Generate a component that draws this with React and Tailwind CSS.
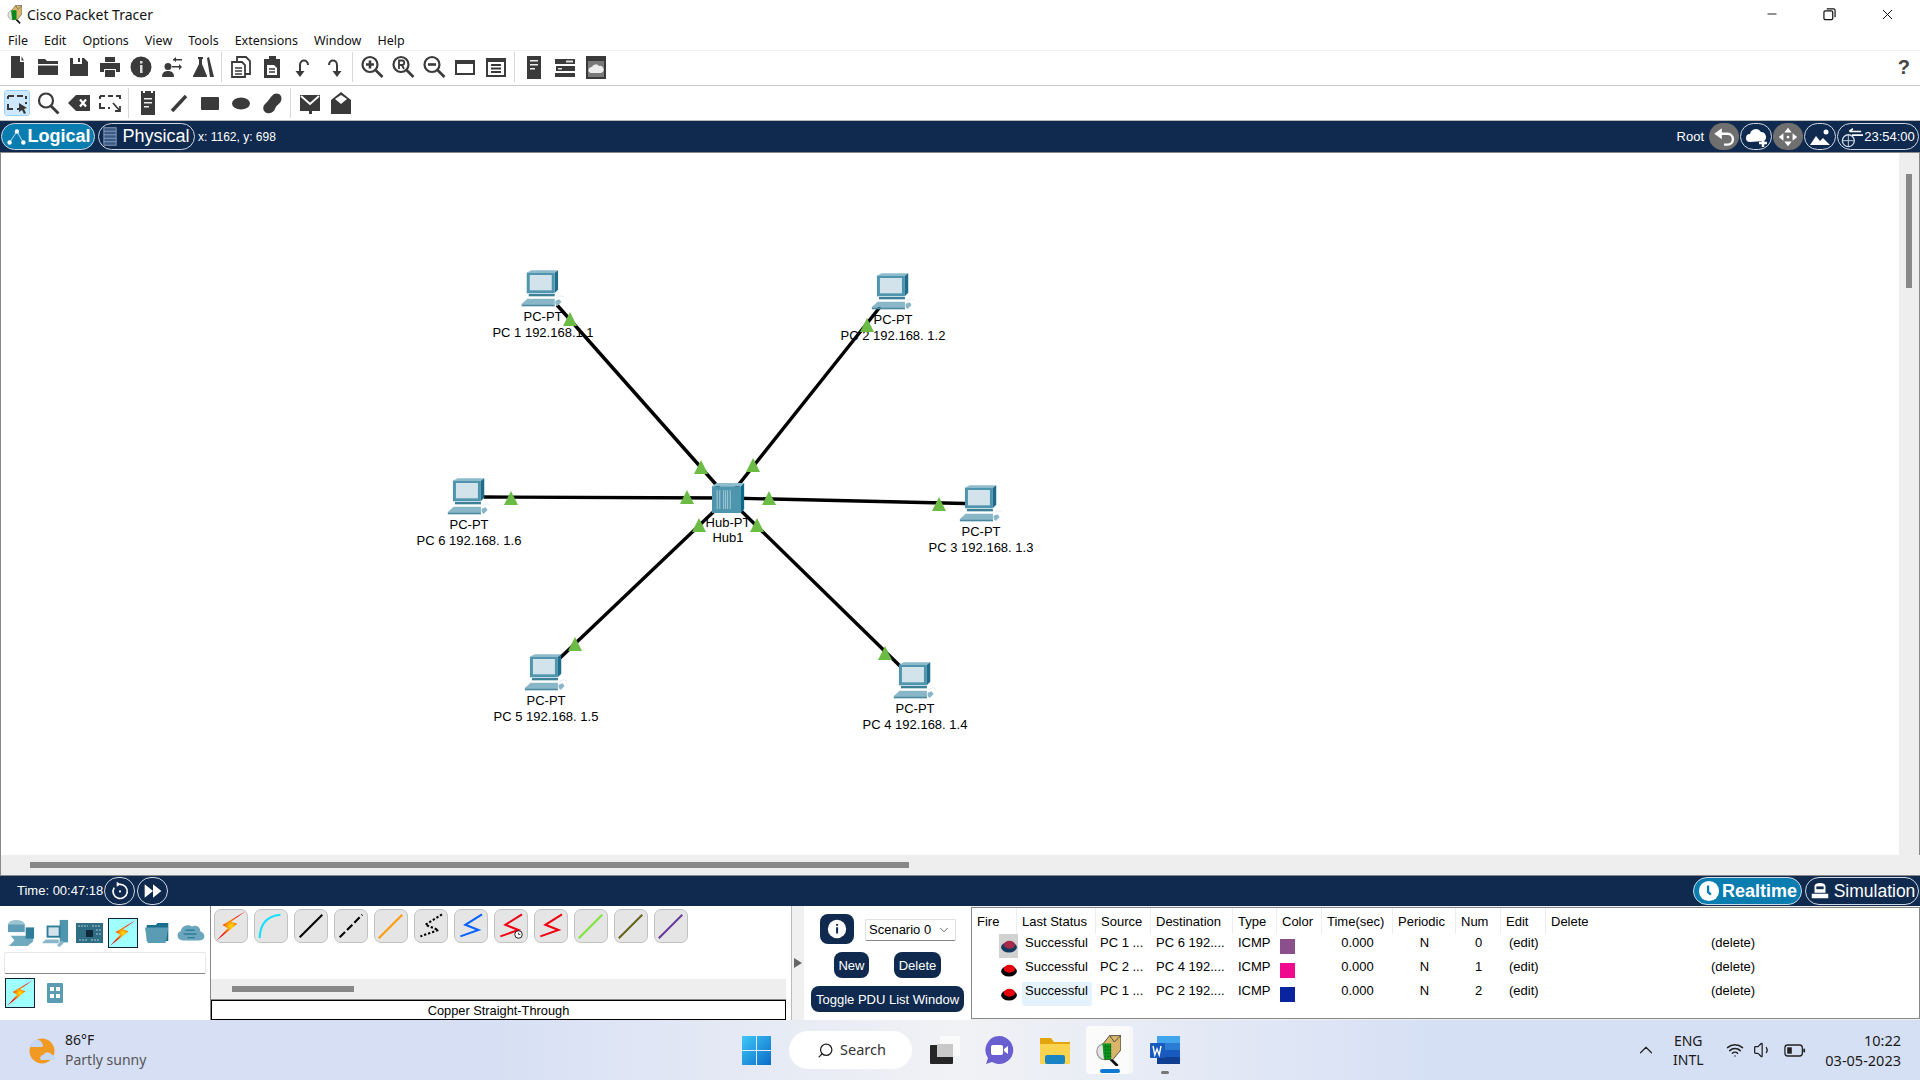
import React from "react";
import { ChevronDown, ChevronUp, Search, Wifi, Volume1, Minus, X } from "lucide-react";

const dark = "#3a3a3a";

// toolbar glyphs, all on a 24 box
const glyphs = {
  newFile: <path d="M6 1h9v6h4v16H6zM16.500 1.500l2.500 4h-2.500z" fill={dark} />,
  open: <path d="M2 4h7l2 2h11v3H2zM2 10.500h20V20H2z" fill={dark} />,
  save: <path d="M3 3h3v6h9V3h2l4 4v14H3zM11 3h2v4h-2z" fill={dark} />,
  print: <path d="M7 2h10v5H7zM2 8h20v9h-4v-3H6v3H2zM7 15h10v7H7z" fill={dark} />,
  info: (
    <>
      <circle cx="12" cy="12" r="10.500" fill={dark} />
      <rect x="11" y="10" width="2.500" height="8" fill="#ddd" />
      <rect x="11" y="6" width="2.500" height="2.500" fill="#ddd" />
    </>
  ),
  inspect: <path d="M8 8a3.500 3.500 0 1 1 0 7 3.500 3.500 0 0 1 0-7zM2 22c0-4 2-6 6-6s6 2 6 6zM13 4h9v1.500h-9zM16 2v5l-3-2.500zM12 11h9v1.500h-9zM19 9l3 3-3 3z" fill={dark} />,
  lab: <path d="M7 2h5v2h-1v5l5 12v1H2v-1l6-12V4H7zM16 3l2-1 5 20h-4z" fill={dark} />,
  copy: (
    <>
      <path d="M8 2h9l4 4v13H8z" fill="#fff" stroke={dark} strokeWidth="1.800" />
      <path d="M3 7h10l3 3v12H3z" fill="#fff" stroke={dark} strokeWidth="1.800" />
      <path d="M6 13h7M6 16h7M6 19h7" stroke={dark} strokeWidth="1.500" />
    </>
  ),
  paste: (
    <>
      <path d="M9 1h7v3h4v19H4V4h5z" fill={dark} />
      <path d="M7 10h7l3 3v7H7z" fill="#fff" />
      <path d="M9 14h6M9 17h6" stroke={dark} strokeWidth="1.400" />
    </>
  ),
  undo: (
    <>
      <path d="M9 22l-4.500-6h9z" fill={dark} />
      <path d="M9 16v-6c0-6 8-6 8 0" fill="none" stroke={dark} strokeWidth="2" />
    </>
  ),
  redo: (
    <>
      <path d="M15 22l-4.500-6h9z" fill={dark} />
      <path d="M15 16v-6c0-6-8-6-8 0" fill="none" stroke={dark} strokeWidth="2" />
    </>
  ),
  zoomIn: (
    <>
      <circle cx="10" cy="9.500" r="7.500" fill="none" stroke={dark} strokeWidth="2.200" />
      <path d="M15.500 15l7 7" stroke={dark} strokeWidth="2.600" />
      <path d="M10 5.500v8M6 9.500h8" stroke={dark} strokeWidth="2.600" />
    </>
  ),
  zoomReset: (
    <>
      <circle cx="10" cy="9.500" r="7.500" fill="none" stroke={dark} strokeWidth="2.200" />
      <path d="M15.500 15l7 7" stroke={dark} strokeWidth="2.600" />
      <path d="M8 14V5.500h3a2 2 0 0 1 0 4.500H8M11 10l2 4" fill="none" stroke={dark} strokeWidth="1.800" />
    </>
  ),
  zoomOut: (
    <>
      <circle cx="10" cy="9.500" r="7.500" fill="none" stroke={dark} strokeWidth="2.200" />
      <path d="M15.500 15l7 7" stroke={dark} strokeWidth="2.600" />
      <path d="M6 9.500h8" stroke={dark} strokeWidth="2.600" />
    </>
  ),
  win: <path d="M2 5h20v15H2zM4 9v9h16V9z" fill={dark} fillRule="evenodd" />,
  listWin: (
    <>
      <path d="M2 3h20v19H2zM4 7v13h16V7z" fill={dark} fillRule="evenodd" />
      <path d="M7 10h10M7 13.500h10M7 17h10" stroke={dark} strokeWidth="1.800" />
    </>
  ),
  tower: (
    <>
      <rect x="5" y="1" width="14" height="23" fill={dark} />
      <path d="M8 5h8v1.500H8zM8 9h8v1.500H8zM8 13h5v1.500H8z" fill="#eee" />
    </>
  ),
  rack: (
    <>
      <path d="M2 4h20v5H2zM3 11h19v5H3zM2 18h20v4H2z" fill={dark} />
      <path d="M13 5.500h7v2h-7zM5 13h4v1.500H5z" fill="#ddd" />
    </>
  ),
  cloudPic: (
    <>
      <rect x="2" y="1" width="20" height="23" fill={dark} />
      <rect x="4" y="6" width="16" height="16" fill="#7a7a7a" />
      <path d="M7 18a3 3 0 0 1 1-6 4 4 0 0 1 7-1 3.500 3.500 0 0 1 2 7z" fill="#ececec" />
    </>
  ),
  select: (
    <>
      <path d="M3 5h6M12 5h6v0M21 5v3M3 5v3M3 13v5h5M12 18h4" fill="none" stroke={dark} strokeWidth="2" />
      <path d="M14 12l8 5-3 1 2 4-2 1-2-4-3 2z" fill={dark} />
      <path d="M21 11v2" stroke={dark} strokeWidth="2" />
    </>
  ),
  inspectBig: (
    <>
      <circle cx="10" cy="9.500" r="7" fill="none" stroke={dark} strokeWidth="2.200" />
      <path d="M15 15l7.500 7.500" stroke={dark} strokeWidth="2.800" />
    </>
  ),
  erase: (
    <>
      <path d="M9 4h14v16H9L1 12z" fill={dark} />
      <path d="M13 8.500l6 7M19 8.500l-6 7" stroke="#fff" strokeWidth="2.200" />
    </>
  ),
  resize: (
    <>
      <path d="M2 5h5M10 5h5M18 5h4v3M2 5v3M2 12v5h5M10 17h2" fill="none" stroke={dark} strokeWidth="2" />
      <path d="M15 12l7 8M22 15v5h-5" fill="none" stroke={dark} strokeWidth="1.800" />
    </>
  ),
  note: (
    <>
      <path d="M5 0h2v2h2V0h6v2h2V0h2v24H5z" fill={dark} />
      <path d="M8 7h8v1.500H8zM8 11h8v1.500H8zM8 15h5v1.500H8z" fill="#eee" />
    </>
  ),
  line: <path d="M5 20L19 5" stroke={dark} strokeWidth="3.500" />,
  rect: <rect x="3" y="6" width="18" height="13" rx="1" fill={dark} />,
  ellipse: <ellipse cx="12" cy="12.500" rx="9" ry="6" fill={dark} />,
  free: <path d="M14 3c5-2 9 2 7 7-1 3-5 4-6 8-1 3-5 5-8 4-4-1-5-6-2-9 3-2 5-7 9-10z" fill={dark} />,
  mail: (
    <>
      <path d="M2 4h20v16h-8v3h-3v-3H2z" fill={dark} />
      <path d="M3 5l9 8 9-8" fill="none" stroke="#fff" strokeWidth="1.800" />
    </>
  ),
  mailOpen: (
    <>
      <path d="M12 1l10 8v14H2V9z" fill={dark} />
      <path d="M6 8l6-4 6 4-6 5z" fill="#fff" />
    </>
  ),
};

function Glyph({ name }) {
  return (
    <svg viewBox="0 0 24 24" className="w-[24px] h-[24px]">
      {glyphs[name]}
    </svg>
  );
}

const toolbarOne = [
  ["newFile", "open", "save", "print", "info", "inspect", "lab"],
  ["copy", "paste", "undo", "redo"],
  ["zoomIn", "zoomReset", "zoomOut", "win", "listWin"],
  ["tower", "rack", "cloudPic"],
];

const toolbarTwo = [
  ["select", "inspectBig", "erase", "resize"],
  ["note", "line", "rect", "ellipse", "free"],
  ["mail", "mailOpen"],
];

function ToolGroups({ groups, active }) {
  return (
    <div className="flex items-center pl-[1px]">
      {groups.map((group, i) => (
        <React.Fragment key={i}>
          {i > 0 && (
            <div className="w-[7px] flex justify-center">
              <div className="w-px h-[30px] bg-[#d8d8d8]" />
            </div>
          )}
          {group.map((name) => (
            <div key={name} className="w-[31px] h-[31px] flex items-center justify-center">
              <div
                className={
                  name === active
                    ? "w-[24px] h-[24px] rounded-[2px] bg-[#cde8ff] outline outline-[#99d1ff]"
                    : "w-[24px] h-[24px]"
                }
              >
                <Glyph name={name} />
              </div>
            </div>
          ))}
        </React.Fragment>
      ))}
    </div>
  );
}

function PtLogo({ className }) {
  return (
    <svg viewBox="0 0 32 40" className={className}>
      <circle cx="12" cy="22" r="10" fill="#e4e4e4" stroke="#999" strokeWidth="1.500" />
      <path d="M18 30l10 10" stroke="#111" strokeWidth="3.500" />
      <path d="M10 12l8-10h14v18l-10 12H12z" fill="#d9b56a" stroke="#333" strokeWidth="1" />
      <path d="M9 12h11v20H11z" fill="#12a012" />
      <path d="M11 16h9M11 20h9M11 24h9M11 28h9M13 12v20M16 12v20M19 12v20" stroke="#063" strokeWidth="0.800" />
      <path d="M18 2l6 8 8-8" fill="none" stroke="#333" strokeWidth="1" />
    </svg>
  );
}

function PcIcon() {
  return (
    <svg viewBox="0 0 135 111" className="w-[45px] h-[37px] translate-x-[1px]">
      <path d="M16 8L30 1h80l-10 7z" fill="#8fbccd" />
      <path d="M100 8l10-7v58l-10 10z" fill="#1f6d8a" />
      <rect x="16" y="8" width="84" height="62" fill="#4f95ae" />
      <rect x="25" y="15" width="66" height="46" fill="#d2e3ec" />
      <rect x="22" y="72" width="78" height="7" fill="#3f8099" />
      <path d="M0 103L18 86h82v17z" fill="#8ab7c8" />
      <rect x="0" y="103" width="100" height="6" fill="#4a8aa3" />
      <path d="M102 92l12-4 6 8-12 12-6-6z" fill="#8ab7c8" />
      <path d="M106 84c4-8 14-8 22-2" fill="none" stroke="#e8f0f4" strokeWidth="4" />
    </svg>
  );
}

function HubIcon() {
  return (
    <svg viewBox="0 0 99 92" className="w-[33px] h-[30px]">
      <path d="M0 10L14 0h85L89 10z" fill="#8fbccd" />
      <path d="M89 10L99 0v80L89 92z" fill="#0c6a89" />
      <rect x="0" y="10" width="89" height="82" fill="#4f95ae" />
      <path d="M16 22v58M24 22v58M36 22v58M42 22v58M48 22v58M56 22v58" stroke="#b8d6e2" strokeWidth="2.500" />
    </svg>
  );
}

const nodes = [
  { pos: "left-[542px] top-[117px]", lines: ["PC-PT", "PC 1 192.168.1.1"] },
  { pos: "left-[892px] top-[120px]", lines: ["PC-PT", "PC 2 192.168. 1.2"] },
  { pos: "left-[468px] top-[325px]", lines: ["PC-PT", "PC 6 192.168. 1.6"] },
  { pos: "left-[980px] top-[332px]", lines: ["PC-PT", "PC 3 192.168. 1.3"] },
  { pos: "left-[545px] top-[501px]", lines: ["PC-PT", "PC 5 192.168. 1.5"] },
  { pos: "left-[914px] top-[509px]", lines: ["PC-PT", "PC 4 192.168. 1.4"] },
];

// links run hub to the edge of each PC, in page coordinates
const links = [
  [557, 305],
  [880, 307],
  [484, 497],
  [965, 503.500],
  [560, 658],
  [900, 666],
];

// centre x, top y of the link lights, in page coordinates
const lights = [
  [570, 312], [701, 460],
  [867, 318], [753, 458],
  [511, 491], [687, 490],
  [939, 497], [769, 491],
  [575, 637], [699, 518],
  [885, 646], [757, 518],
];

function Canvas() {
  return (
    <div className="relative flex-1 overflow-hidden">
      <svg viewBox="1 153 1898 702" className="absolute inset-0 w-full h-full">
        {links.map(([x, y]) => (
          <line key={x} x1="728" y1="498" x2={x} y2={y} stroke="#000" strokeWidth="3.400" />
        ))}
      </svg>
      {nodes.map((n) => (
        <div key={n.lines[1]} className={`absolute ${n.pos} -translate-x-1/2 flex flex-col items-center`}>
          <PcIcon />
          <div className="mt-[2px] text-center text-[13px] leading-[16px] whitespace-nowrap text-black">
            <div>{n.lines[0]}</div>
            <div>{n.lines[1]}</div>
          </div>
        </div>
      ))}
      <div className="absolute left-[727px] top-[330px] -translate-x-1/2 flex flex-col items-center">
        <HubIcon />
        <div className="mt-[2px] text-center text-[13px] leading-[15px] whitespace-nowrap text-black">
          <div>Hub-PT</div>
          <div>Hub1</div>
        </div>
      </div>
      <svg viewBox="1 153 1898 702" className="absolute inset-0 w-full h-full">
        {lights.map(([x, y]) => (
          <polygon key={x} points={`${x},${y} ${x + 7},${y + 14} ${x - 7},${y + 14}`} fill="#6cbb45" />
        ))}
      </svg>
    </div>
  );
}

function Pill({ children, className }) {
  return (
    <div className={`h-[27px] flex items-center justify-center rounded-full border border-[#cfd8e3] ${className}`}>
      {children}
    </div>
  );
}

function TopBar() {
  return (
    <div className="h-[31px] shrink-0 bg-[#0f2a4e] flex items-center text-white">
      <Pill className="ml-[1px] w-[94px] bg-[#0a7db0]">
        <svg viewBox="0 0 24 24" className="w-[22px] h-[22px]">
          <path d="M13 6L5 18M13 6l7 12" stroke="#fff" strokeWidth="0.800" />
          <circle cx="13" cy="6" r="2.400" fill="#fff" />
          <circle cx="5" cy="18" r="2.400" fill="#fff" />
          <circle cx="20" cy="18" r="2.400" fill="#fff" />
        </svg>
        <span className="text-[18px] font-bold">Logical</span>
      </Pill>
      <Pill className="ml-[3px] w-[97px] gap-[5px]">
        <svg viewBox="0 0 16 22" className="w-[14px] h-[21px]">
          <rect x="1" y="1" width="14" height="20" fill="#3a5a86" stroke="#8ea3bf" />
          <path d="M1 5h14M1 9h14M1 13h14M1 17h14" stroke="#8ea3bf" />
        </svg>
        <span className="text-[18px]">Physical</span>
      </Pill>
      <span className="ml-[3px] text-[12px]">x: 1162, y: 698</span>
      <span className="ml-auto text-[13px]">Root</span>
      <div className="ml-[5px] w-[30px] h-[27px] rounded-full bg-[#6f6f6f] flex items-center justify-center">
        <svg viewBox="0 0 24 24" className="w-[26px] h-[26px]">
          <path d="M3 9l7-5v10z" fill="#fff" />
          <path d="M9 9h6c7 0 7 10 0 10h-3" fill="none" stroke="#fff" strokeWidth="2.200" />
        </svg>
      </div>
      <Pill className="ml-[1px] w-[32px]">
        <svg viewBox="0 0 24 24" className="w-[24px] h-[24px]">
          <path d="M6 17a4 4 0 0 1 0-8 6 6 0 0 1 11-2 5 5 0 0 1 3 9z" fill="#fff" />
          <path d="M19 14v8M15 18h8" stroke="#fff" strokeWidth="2.500" />
        </svg>
      </Pill>
      <div className="ml-[1px] w-[30px] h-[27px] rounded-full bg-[#6f6f6f] flex items-center justify-center">
        <svg viewBox="0 0 24 24" className="w-[22px] h-[22px]" fill="#fff">
          <path d="M12 2l4 5H8zM12 22l-4-5h8zM2 12l5-4v8zM22 12l-5 4V8z" />
          <circle cx="12" cy="12" r="1.500" />
        </svg>
      </div>
      <Pill className="ml-[1px] w-[32px]">
        <svg viewBox="0 0 24 24" className="w-[24px] h-[24px]" fill="#fff">
          <path d="M2 20l6-9 4 5 3-3 7 7z" />
          <circle cx="18" cy="7" r="2.500" />
        </svg>
      </Pill>
      <Pill className="ml-[1px] w-[82px] mr-[1px] gap-[1px]">
        <svg viewBox="0 0 24 24" className="w-[22px] h-[22px]">
          <circle cx="8" cy="16" r="6.500" fill="none" stroke="#cfd8e3" strokeWidth="1.500" />
          <path d="M2 16h12M8 9v13" stroke="#cfd8e3" />
          <path d="M10 6h12M13 3l-4 3M12 10h12" stroke="#fff" strokeWidth="1.800" />
        </svg>
        <span className="text-[13px]">23:54:00</span>
      </Pill>
    </div>
  );
}

function TimeBar() {
  return (
    <div className="h-[30px] shrink-0 bg-[#0f2a4e] flex items-center text-white">
      <span className="ml-[17px] text-[13px] w-[87px]">Time: 00:47:18</span>
      <Pill className="w-[31px] h-[28px]">
        <svg viewBox="0 0 24 24" className="w-[20px] h-[20px]">
          <path d="M12 4a8.500 8.500 0 1 1-7 4" fill="none" stroke="#fff" strokeWidth="2" />
          <path d="M8 1l5 3-5 3z" fill="#fff" />
          <circle cx="12" cy="12.500" r="1.300" fill="#fff" />
        </svg>
      </Pill>
      <Pill className="ml-[2px] w-[31px] h-[28px]">
        <svg viewBox="0 0 24 24" className="w-[20px] h-[20px]" fill="#fff">
          <path d="M2 4l10 8-10 8zM12 4l10 8-10 8z" />
        </svg>
      </Pill>
      <Pill className="ml-auto w-[109px] h-[28px] bg-[#0a7db0] gap-[2px]">
        <svg viewBox="0 0 24 24" className="w-[22px] h-[22px]">
          <circle cx="12" cy="12" r="11" fill="#fff" />
          <path d="M11 6v7l3 3" fill="none" stroke="#0a7db0" strokeWidth="2.500" />
        </svg>
        <span className="text-[18px] font-bold">Realtime</span>
      </Pill>
      <Pill className="ml-[3px] mr-[1px] w-[114px] h-[28px] gap-[3px]">
        <svg viewBox="0 0 24 24" className="w-[22px] h-[22px]" fill="#fff">
          <path d="M6 14V7c0-5 12-5 12 0v7zM3 15h18v5H3z" />
          <rect x="8" y="7" width="8" height="3" fill="#0f2a4e" />
        </svg>
        <span className="text-[17.500px]">Simulation</span>
      </Pill>
    </div>
  );
}

function Bolt() {
  return (
    <svg viewBox="0 0 30 30" className="w-full h-full">
      <defs>
        <radialGradient id="boltFill" cx="50%" cy="50%" r="45%">
          <stop offset="0%" stopColor="#ffe400" />
          <stop offset="30%" stopColor="#ff9a00" />
          <stop offset="75%" stopColor="#f02000" />
          <stop offset="100%" stopColor="#e80000" />
        </radialGradient>
      </defs>
      <polygon points="29,1 15,11 21,13 1,29 12,17 7,14" fill="url(#boltFill)" />
    </svg>
  );
}

function BoltBox() {
  return (
    <div className="w-[30px] h-[30px] bg-[#a0ffff] border border-[#123]">
      <Bolt />
    </div>
  );
}

function DeviceTypes() {
  return (
    <div className="w-[210px] shrink-0 bg-white">
      <div className="flex pl-[4px] pt-[12px]">
        <div className="w-[34px] h-[30px] flex items-center justify-center">
          <svg viewBox="0 0 30 30" className="w-[30px] h-[28px]">
            <ellipse cx="10" cy="6" rx="9" ry="5" fill="#9cc3d2" />
            <rect x="1" y="6" width="18" height="8" fill="#5d9db5" />
            <path d="M4 18h24v6l-6 5H2l6-6z" fill="#6faabf" />
            <rect x="20" y="9" width="9" height="12" fill="#2f7c99" />
          </svg>
        </div>
        <div className="w-[34px] h-[30px] flex items-center justify-center">
          <svg viewBox="0 0 30 30" className="w-[30px] h-[28px]">
            <rect x="20" y="1" width="9" height="24" fill="#4f95ae" />
            <rect x="6" y="7" width="15" height="13" fill="#2f7c99" />
            <rect x="8" y="9" width="11" height="9" fill="#d2e3ec" />
            <path d="M1 26l4-4h14v4zM17 28l5-5 3 2-5 5z" fill="#8ab7c8" />
          </svg>
        </div>
        <div className="w-[34px] h-[30px] flex items-center justify-center">
          <svg viewBox="0 0 27 22" className="w-[27px] h-[22px]">
            <rect x="0" y="1" width="27" height="20" fill="#2f6d85" />
            <rect x="10" y="8" width="7" height="7" fill="#10283a" />
            <path d="M2 4h10M16 4h9M3 18h8M15 18h9M20 8h5M20 12h5" stroke="#a8cbd8" strokeWidth="1.200" strokeDasharray="2 1" />
          </svg>
        </div>
        <div className="w-[34px] h-[30px] flex justify-center">
          <BoltBox />
        </div>
        <div className="w-[34px] h-[30px] flex items-center justify-center">
          <svg viewBox="0 0 30 26" className="w-[27px] h-[24px]">
            <path d="M3 4h10l2-2h12v20H3z" fill="#1a6f8d" />
            <path d="M1 7h26l-3 17H4z" fill="#5a9cb4" />
          </svg>
        </div>
        <div className="w-[34px] h-[30px] flex items-center justify-center">
          <svg viewBox="0 0 30 20" className="w-[28px] h-[20px]">
            <path d="M7 18c-8 0-8-9-3-10 1-6 8-8 12-5 5-2 9 1 9 5 6 2 6 10-1 10z" fill="#6aa6bc" />
            <path d="M9 7h10M7 11h14M11 15h8" stroke="#2f7c99" strokeWidth="1.500" />
          </svg>
        </div>
      </div>
      <div className="mx-[4px] mt-[4px] h-[22px] bg-white border border-[#e8e8e8] border-b-[#888] rounded-[2px]" />
      <div className="flex items-center mt-[4px] pl-[5px]">
        <BoltBox />
        <svg viewBox="0 0 16 20" className="ml-[12px] w-[16px] h-[20px]">
          <rect width="16" height="20" rx="1" fill="#5a9cb4" />
          <path d="M3 4h4v4H3zM9 4h4v4H9zM3 11h4v4H3zM9 11h4v4H9z" fill="#fff" />
        </svg>
      </div>
    </div>
  );
}

const zig = "M28.700 4.700L11 15.700 24.900 21.300 5.700 28";
const cables = [
  { d: null },
  { d: "M5 30C5 15 13 6 27 5", color: "#16e0ff" },
  { d: "M5 29L29 5", color: "#000" },
  { d: "M5 29L29 5", color: "#000", dash: "8 3" },
  { d: "M4 30L29 5", color: "#ff9a0a" },
  { d: zig, color: "#000", dash: "2.500 2" },
  { d: zig, color: "#0a62ff" },
  { d: zig, color: "#f00010", clock: true },
  { d: zig, color: "#f00010" },
  { d: "M4 30L29 5", color: "#7ee43c" },
  { d: "M4 30L29 5", color: "#62661a" },
  { d: "M4 30L29 5", color: "#6a3a9a" },
];

function CablePanel() {
  return (
    <div className="w-[576px] shrink-0 flex flex-col bg-white border-l border-[#888]">
      <div className="h-[73px] flex gap-[6px] pl-[3px] pt-[3px]">
        {cables.map((c, i) => (
          <div key={i} className="w-[34px] h-[34px] rounded-[7px] bg-[#e5e5e5] border border-[#c2c2c2]">
            {c.d ? (
              <svg viewBox="0 0 34 34" className="w-full h-full">
                <path d={c.d} fill="none" stroke={c.color} strokeWidth="2.200" strokeDasharray={c.dash} />
                {c.clock && (
                  <>
                    <circle cx="25" cy="26" r="4" fill="#fff" stroke="#111" strokeWidth="1" />
                    <path d="M25 24v2h2" fill="none" stroke="#111" strokeWidth="0.800" />
                  </>
                )}
              </svg>
            ) : (
              <Bolt />
            )}
          </div>
        ))}
      </div>
      <div className="h-[21px] bg-[#eee] border-b border-[#888] pl-[21px] pt-[7px]">
        <div className="w-[122px] h-[6px] bg-[#888]" />
      </div>
      <div className="h-[20px] pt-[1px] border border-black flex items-center justify-center text-[12.800px] text-black">
        Copper Straight-Through
      </div>
    </div>
  );
}

function NavyBtn({ children, className }) {
  return (
    <div className={`bg-[#0f2a4e] text-white text-[13px] rounded-[8px] flex items-center justify-center ${className}`}>
      {children}
    </div>
  );
}

function ScenarioPanel() {
  return (
    <div className="w-[167px] shrink-0 bg-white">
      <div className="flex items-center pt-[8px]">
        <NavyBtn className="ml-[16px] w-[34px] h-[30px]">
          <svg viewBox="0 0 24 24" className="w-[22px] h-[22px]">
            <circle cx="12" cy="12" r="10" fill="#fff" />
            <path d="M11 10h2.200v7H11zM11 6.500h2.200v2H11z" fill="#0f2a4e" />
          </svg>
        </NavyBtn>
        <div className="ml-[11px] mt-[1px] w-[91px] h-[22px] bg-white border border-[#e0e0e0] border-b-[#888] rounded-[2px] flex items-center justify-between pl-[3px] pr-[4px] text-[13px] text-black">
          <span>Scenario 0</span>
          <ChevronDown size={14} strokeWidth={1.500} color="#555" />
        </div>
      </div>
      <div className="flex mt-[8px]">
        <NavyBtn className="ml-[30px] w-[35px] h-[26px] pt-[1px]">New</NavyBtn>
        <NavyBtn className="ml-[25px] w-[47px] h-[26px] pt-[1px]">Delete</NavyBtn>
      </div>
      <NavyBtn className="ml-[7px] mt-[8px] w-[153px] h-[26px] pt-[1px]">Toggle PDU List Window</NavyBtn>
    </div>
  );
}

const cols = "grid grid-cols-[45px_79px_55px_82px_44px_45px_71px_63px_45px_45px_1fr]";
const headers = ["Fire", "Last Status", "Source", "Destination", "Type", "Color", "Time(sec)", "Periodic", "Num", "Edit", "Delete"];
const pdus = [
  { src: "PC 1 ...", dst: "PC 6 192....", color: "bg-[#8b4f8b]", num: 0 },
  { src: "PC 2 ...", dst: "PC 4 192....", color: "bg-[#ef0a8e]", num: 1 },
  { src: "PC 1 ...", dst: "PC 2 192....", color: "bg-[#0a249f]", num: 2 },
];

function PduTable() {
  return (
    <div className="flex-1 h-[112px] mt-[1px] bg-white border border-[#888] text-[13px] text-black leading-[24px]">
      <div className={`${cols} h-[23px]`}>
        {headers.map((h) => (
          <div key={h} className="pl-[5px] pt-[2px] border-r border-[#eee] last:border-r-0">
            {h}
          </div>
        ))}
      </div>
      {pdus.map((p, i) => (
        <div key={p.num} className={`${cols} h-[24px]`}>
          <div className="flex justify-end">
            <div className={`w-[19px] h-[24px] mt-[3px] mr-[-1px] flex items-center justify-center ${i === 0 ? "bg-[#d2d2d2]" : ""}`}>
              <svg viewBox="0 0 20 16" className="w-[18px] h-[14px]">
                <ellipse cx="10" cy="9.500" rx="9" ry="6" fill={i === 0 ? "#123a5e" : "#000"} />
                <ellipse cx="10.500" cy="6.500" rx="6.500" ry="4.500" fill={i === 0 ? "#a82a4a" : "#e8000c"} />
              </svg>
            </div>
          </div>
          <div>
            <div className={`ml-[5px] mr-[4px] mt-[3px] h-[24px] rounded-[2px] pl-[3px] leading-[18px] ${i === 2 ? "bg-[#e5f3ff]" : ""}`}>
              Successful
            </div>
          </div>
          <div className="pl-[4px]">{p.src}</div>
          <div className="pl-[5px]">{p.dst}</div>
          <div className="pl-[5px]">ICMP</div>
          <div className="pl-[3px] pt-[8px]">
            <div className={`w-[15px] h-[15px] ${p.color}`} />
          </div>
          <div className="text-center">0.000</div>
          <div className="text-center">N</div>
          <div className="text-center">{p.num}</div>
          <div className="pl-[8px]">(edit)</div>
          <div className="pl-[165px]">(delete)</div>
        </div>
      ))}
    </div>
  );
}

function Taskbar() {
  return (
    <div className="h-[60px] shrink-0 flex items-center bg-linear-to-r from-[#d6dff4] from-25% via-[#f1f2f5] via-50% to-[#d6e0f5] to-75% font-['Noto_Sans',sans-serif] text-[#1a1a1a]">
      <div className="w-[742px] shrink-0 flex items-center pl-[27px]">
        <svg viewBox="0 0 28 28" className="w-[28px] h-[28px]">
          <circle cx="15" cy="15" r="12.500" fill="#f09a24" />
          <path d="M3 9a3 3 0 0 1 3-3 5 5 0 0 1 9 1 2.500 2.500 0 0 1 0 4H4a2 2 0 0 1-1-2z" fill="#c6d8f4" />
          <path d="M14 24a3 3 0 0 1 2-5 5 5 0 0 1 9 0 2.500 2.500 0 0 1 1 5z" fill="#c6d8f4" />
        </svg>
        <div className="ml-[10px]">
          <div className="text-[14px] leading-[20px]">86°F</div>
          <div className="text-[14px] leading-[20px] text-[#555]">Partly sunny</div>
        </div>
      </div>
      <svg viewBox="0 0 29 29" className="w-[29px] h-[29px] shrink-0">
        <defs>
          <linearGradient id="winFill" x1="0" y1="0" x2="1" y2="1">
            <stop offset="0%" stopColor="#3fc8f8" />
            <stop offset="100%" stopColor="#0a6cc8" />
          </linearGradient>
        </defs>
        <path d="M0 0h14v14H0zM15 0h14v14H15zM0 15h14v14H0zM15 15h14v14H15z" fill="url(#winFill)" />
      </svg>
      <div className="ml-[18px] w-[123px] h-[38px] shrink-0 rounded-full bg-white flex items-center pl-[28px] gap-[6px] text-[14.500px] text-[#333]">
        <Search size={17} strokeWidth={1.800} color="#222" className="-scale-x-100" />
        <span>Search</span>
      </div>
      <svg viewBox="0 0 30 28" className="ml-[18px] w-[30px] h-[28px] shrink-0">
        <rect x="10" y="0" width="20" height="20" fill="#fafafa" />
        <rect x="0" y="9" width="23" height="19" rx="1" fill="#262626" />
        <rect x="7" y="8" width="16" height="13" fill="#c9c9c9" />
      </svg>
      <svg viewBox="0 0 30 30" className="ml-[24px] w-[30px] h-[30px] shrink-0">
        <path d="M15 1a14 14 0 1 1-7 26l-6 2 2-6A14 14 0 0 1 15 1z" fill="#6a5fd0" />
        <rect x="7" y="10" width="12" height="10" rx="2" fill="#fff" />
        <path d="M20 14l4-3v8l-4-3z" fill="#fff" />
      </svg>
      <svg viewBox="0 0 30 28" className="ml-[26px] w-[30px] h-[28px] shrink-0">
        <path d="M0 2h11l3 4h16v22H0z" fill="#e3a50d" />
        <path d="M0 8h30v20H0z" fill="#fad44f" />
        <rect x="5" y="19" width="20" height="9" rx="2" fill="#1a83c4" />
      </svg>
      <div className="ml-[16px] w-[43px] h-[48px] shrink-0 relative rounded-[4px] bg-[#fbfbfb] shadow-[4px_0_0_#f7f7f7] flex items-center justify-center">
        <PtLogo className="w-[26px] h-[32px]" />
        <div className="absolute left-[14px] bottom-[1px] w-[20px] h-[4px] rounded-full bg-[#0a78d4]" />
      </div>
      <div className="ml-[21px] w-[30px] h-[48px] shrink-0 relative flex items-center justify-center">
        <svg viewBox="0 0 30 28" className="w-[30px] h-[28px]">
          <rect x="7" y="0" width="23" height="7" fill="#41a5ee" />
          <rect x="7" y="7" width="23" height="7" fill="#2b7cd3" />
          <rect x="7" y="14" width="23" height="7" fill="#185abd" />
          <rect x="7" y="21" width="23" height="7" fill="#103f91" />
          <rect x="0" y="7" width="15" height="15" rx="1" fill="#185abd" />
          <path d="M3 10l1.800 9 2.200-6 2.200 6 1.800-9" fill="none" stroke="#fff" strokeWidth="1.400" />
        </svg>
        <div className="absolute left-[11px] bottom-[0px] w-[8px] h-[3px] rounded-full bg-[#777]" />
      </div>
      <div className="ml-auto w-[285px] shrink-0 flex items-center pr-[19px]">
        <ChevronUp size={22} strokeWidth={1.300} color="#222" />
        <div className="ml-[16px] text-center text-[14px] leading-[19px]">
          <div>ENG</div>
          <div>INTL</div>
        </div>
        <Wifi size={18} strokeWidth={2} color="#222" className="ml-[22px]" />
        <Volume1 size={20} strokeWidth={1.500} color="#222" className="ml-[9px]" />
        <svg viewBox="0 0 24 14" className="ml-[11px] w-[22px] h-[13px]">
          <rect x="1" y="1" width="19" height="12" rx="3" fill="none" stroke="#222" strokeWidth="1.400" />
          <rect x="3.500" y="3.500" width="5" height="7" fill="#222" />
          <rect x="21" y="5" width="2" height="4" fill="#222" />
        </svg>
        <div className="ml-auto text-right text-[14.500px] leading-[20px]">
          <div>10:22</div>
          <div>03-05-2023</div>
        </div>
      </div>
    </div>
  );
}

export default function App() {
  return (
    <div className="w-[1920px] h-[1080px] overflow-hidden flex flex-col bg-white font-['Liberation_Sans',sans-serif]">
      <div className="h-[30px] shrink-0 flex items-center pb-[2px] font-['Noto_Sans',sans-serif] text-[14px] text-[#111]">
        <PtLogo className="ml-[7px] w-[15px] h-[20px]" />
        <span className="ml-[5px]">Cisco Packet Tracer</span>
        <div className="ml-auto flex items-center">
          <Minus size={14} strokeWidth={1.600} color="#111" />
          <svg viewBox="0 0 14 14" className="ml-[44px] w-[13px] h-[13px]">
            <rect x="1" y="3" width="9.500" height="9.500" rx="1.500" fill="none" stroke="#111" strokeWidth="1.300" />
            <path d="M4 1h7.500A1.500 1.500 0 0 1 13 2.500V10" fill="none" stroke="#111" strokeWidth="1.300" />
          </svg>
          <X size={17} strokeWidth={1.400} color="#111" className="ml-[43px] mr-[24px]" />
        </div>
      </div>
      <div className="h-[20px] shrink-0 flex items-center gap-[16px] pl-[8px] pt-[2px] font-['Noto_Sans',sans-serif] text-[12.500px] text-[#111]">
        {["File", "Edit", "Options", "View", "Tools", "Extensions", "Window", "Help"].map((m) => (
          <span key={m}>{m}</span>
        ))}
      </div>
      <div className="h-[36px] shrink-0 flex items-center justify-between pb-[2px] border-t border-[#f0f0f0] border-b border-b-[#c8c8c8]">
        <ToolGroups groups={toolbarOne} />
        <span className="mr-[10px] text-[20px] font-bold text-[#444]">?</span>
      </div>
      <div className="h-[35px] shrink-0 flex items-center pb-[1px] border-b border-[#bbb]">
        <ToolGroups groups={toolbarTwo} active="select" />
      </div>
      <TopBar />
      <div className="flex-1 min-h-0 flex flex-col border-l border-t border-[#888]">
        <div className="flex-1 min-h-0 flex">
          <Canvas />
          <div className="w-[21px] shrink-0 bg-[#eee] border-r border-[#888] pl-[7px] pt-[21px]">
            <div className="w-[6px] h-[114px] bg-[#888]" />
          </div>
        </div>
        <div className="h-[21px] shrink-0 bg-[#eee] border-b border-[#888] pl-[29px] pt-[7px]">
          <div className="w-[879px] h-[6px] bg-[#888]" />
        </div>
      </div>
      <TimeBar />
      <div className="h-[114px] shrink-0 flex bg-[#f0f0f0]">
        <DeviceTypes />
        <CablePanel />
        <div className="w-[5px] bg-white" />
        <div className="w-[13px] shrink-0 bg-[#f0f0f0] border-l border-[#bbb] flex items-center justify-center">
          <div className="w-0 h-0 border-y-[5px] border-y-transparent border-l-[8px] border-l-[#666]" />
        </div>
        <ScenarioPanel />
        <PduTable />
      </div>
      <Taskbar />
    </div>
  );
}
